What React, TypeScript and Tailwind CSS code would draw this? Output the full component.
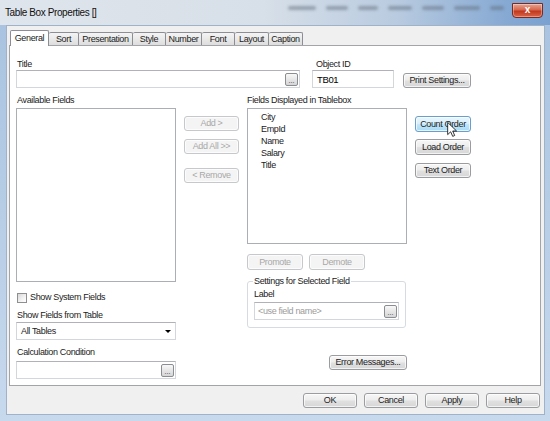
import React from "react";

type Variant = "normal" | "disabled" | "hover";

const variantClass: Record<Variant, string> = {
  normal:
    "border-[#9a9c9f] text-[#222222] bg-[linear-gradient(to_bottom,#f7f7f7,#ededed_46%,#e0e0e0_54%,#d7d7d7)]",
  disabled: "border-[#c6c8cb] text-[#a8a8a8] bg-[#f4f4f4]",
  hover:
    "border-[#6a9fcb] text-[#222222] bg-[linear-gradient(to_bottom,#eaf6fd,#d9f0fc_46%,#bfe6fb_54%,#a9daf5)]",
};

function Button({
  label,
  className,
  variant = "normal",
  children,
}: {
  label: string;
  className: string;
  variant?: Variant;
  children?: React.ReactNode;
}) {
  return (
    <div
      className={`relative flex items-center justify-center rounded-[3px] border shadow-[inset_0_0_0_1px_rgba(255,255,255,0.7)] ${variantClass[variant]} ${className}`}
    >
      <span className="whitespace-nowrap">{label}</span>
      {children}
    </div>
  );
}

function DotsButton() {
  return (
    <div className="flex h-[13px] w-[13px] items-end justify-center rounded-[2px] border border-[#8a8d91] bg-[linear-gradient(to_bottom,#f8f8f8,#e6e6e6_50%,#d6d6d6)] pb-[1px]">
      <span className="text-[7px] leading-[6px] tracking-[0px] text-[#333]">...</span>
    </div>
  );
}

function TextBox({
  className,
  children,
}: {
  className: string;
  children?: React.ReactNode;
}) {
  return (
    <div
      className={`flex items-center border border-[#d3d6da] border-t-[#b0b2b7] bg-white ${className}`}
    >
      {children}
    </div>
  );
}

const tabs = [
  { name: "Sort", w: "w-[30px]" },
  { name: "Presentation", w: "w-[54px]" },
  { name: "Style", w: "w-[33px]" },
  { name: "Number", w: "w-[36px]" },
  { name: "Font", w: "w-[33px]" },
  { name: "Layout", w: "w-[34px]" },
  { name: "Caption", w: "w-[34px]" },
];

const displayedFields = ["City", "EmpId", "Name", "Salary", "Title"];

// blurred menu words of the window behind the glass caption
const glassSmudges = [
  "w-[28px]",
  "w-[22px]",
  "w-[20px]",
  "w-[24px]",
  "w-[22px]",
  "w-[26px]",
  "w-[14px]",
];

function Cursor() {
  return (
    <svg
      className="absolute left-[31px] top-[5px]"
      width="10"
      height="15"
      viewBox="0 0 12 19"
    >
      <path
        d="M0.5 0.5 L0.5 16 L4.3 12.4 L6.9 18.2 L9.4 17.1 L6.9 11.4 L11.8 11.4 Z"
        fill="#ffffff"
        stroke="#000000"
        strokeWidth="1"
        strokeLinejoin="round"
      />
    </svg>
  );
}

export default function App() {
  return (
    <div className="flex h-[421px] w-[550px] flex-col overflow-hidden bg-[#b8cde6] font-['Liberation_Sans',Arial,sans-serif] text-[9px] leading-[11px] tracking-[-0.35px] text-[#222222]">
      {/* caption bar */}
      <div className="flex h-[25px] items-center bg-[linear-gradient(to_right,#dfe5ec,#d7dfe8_48%,#b9cbe0_72%,#86a9d3_92%,#7aa1d0)]">
        <span className="pl-[5px] text-[10px] tracking-[-0.4px] text-[#111]">
          Table Box Properties []
        </span>
        <div className="flex-1" />
        <div className="mt-[-9px] flex gap-[10px] blur-[1.5px]">
          {glassSmudges.map((w, i) => (
            <div key={i} className={`h-[4px] rounded-[2px] bg-[#5d6978] opacity-50 ${w}`} />
          ))}
        </div>
        <div className="mb-[5px] ml-[8px] mr-[7px] flex h-[15px] w-[31px] items-center justify-center rounded-b-[4px] border border-[#7a2a20] bg-[linear-gradient(to_bottom,#e8a493,#d6674e_45%,#c2381c_55%,#d9644a)] shadow-[inset_0_0_0_1px_rgba(255,255,255,0.35)]">
          <span className="text-[10px] font-bold leading-[10px] tracking-[0px] text-white">x</span>
        </div>
      </div>

      {/* window frame + client area */}
      <div className="flex flex-1 flex-col bg-[linear-gradient(to_bottom,#a9c3e0,#c7d9ed)] pb-[6px] pl-[6px] pr-[5px]">
        <div className="flex flex-1 flex-col border border-[#9fb2c8] bg-[#f0f0f0] pl-[2px] pr-[3px] pt-[4px]">
          {/* tab strip */}
          <div className="relative z-10 -mb-px flex h-[16px] items-end pl-[1px]">
            <div className="flex h-[16px] w-[39px] items-center justify-center rounded-t-[2px] border-l border-r border-t border-[#8c8e94] bg-white">
              General
            </div>
            {tabs.map((t) => (
              <div
                key={t.name}
                className={`mb-[1px] flex h-[13px] items-center justify-center rounded-t-[2px] border-r border-t border-[#8c8e94] bg-[linear-gradient(to_bottom,#f4f4f4,#e9e9e9_50%,#dddddd)] ${t.w}`}
              >
                {t.name}
              </div>
            ))}
          </div>

          {/* tab page */}
          <div className="flex h-[341px] flex-col border border-[#a3a4a7] bg-white pl-[6px] pt-[13px]">
            {/* title / object id row */}
            <div className="flex items-end">
              <div className="flex w-[284px] flex-col">
                <span className="h-[11px] pl-[1px]">Title</span>
                <TextBox className="h-[18px] justify-end pr-[1px]">
                  <DotsButton />
                </TextBox>
              </div>
              <div className="ml-[12px] flex w-[82px] flex-col">
                <span className="h-[11px] pl-[4px]">Object ID</span>
                <TextBox className="h-[18px] pl-[4px]">
                  <span className="text-[9.5px] text-black">TB01</span>
                </TextBox>
              </div>
              <Button label="Print Settings..." className="ml-[9px] h-[15px] w-[68px]" />
            </div>

            {/* field lists row */}
            <div className="mt-[7px] flex items-start">
              {/* available fields column */}
              <div className="flex w-[160px] flex-col">
                <span className="h-[11px] pl-[1px]">Available Fields</span>
                <div className="mt-[2px] h-[174px] border border-[#abaeb3] bg-white" />
                <div className="mt-[10px] flex h-[11px] items-center pl-[1px]">
                  <div className="h-[10px] w-[10px] border border-[#8e8f8f] bg-[linear-gradient(135deg,#d9d9d9,#f7f7f7_70%,#ffffff)]" />
                  <span className="ml-[3px]">Show System Fields</span>
                </div>
                <span className="mt-[7px] h-[11px] pl-[1px]">Show Fields from Table</span>
                <TextBox className="mt-[1px] h-[18px] justify-between pl-[4px] pr-[4px]">
                  <span>All Tables</span>
                  <div className="h-0 w-0 border-l-[3px] border-r-[3px] border-t-[3px] border-l-transparent border-r-transparent border-t-black" />
                </TextBox>
                <span className="mt-[7px] h-[11px] pl-[1px]">Calculation Condition</span>
                <TextBox className="mt-[3px] h-[18px] justify-end pr-[1px]">
                  <DotsButton />
                </TextBox>
              </div>

              {/* add / remove buttons */}
              <div className="ml-[8px] flex w-[55px] flex-col pt-[21px]">
                <Button label="Add >" variant="disabled" className="h-[15px]" />
                <Button label="Add All >>" variant="disabled" className="mt-[8px] h-[15px]" />
                <Button label="< Remove" variant="disabled" className="mt-[14px] h-[15px]" />
              </div>

              {/* displayed fields column */}
              <div className="ml-[8px] flex w-[160px] flex-col">
                <span className="h-[11px]">Fields Displayed in Tablebox</span>
                <div className="mt-[2px] flex h-[136px] flex-col border border-[#abaeb3] bg-white pl-[13px] pt-[2px]">
                  {displayedFields.map((f) => (
                    <span key={f} className="leading-[12px]">
                      {f}
                    </span>
                  ))}
                </div>
                <div className="mt-[10px] flex gap-[6px]">
                  <Button label="Promote" variant="disabled" className="h-[16px] w-[56px]" />
                  <Button label="Demote" variant="disabled" className="h-[16px] w-[56px]" />
                </div>
                <fieldset className="mt-[5px] w-[159px] rounded-[3px] border border-[#d5dbe1] pb-[7px] pl-[6px] pr-[6px]">
                  <legend className="ml-[-1px] px-[1px] leading-[12px]">
                    Settings for Selected Field
                  </legend>
                  <span className="mt-[2px] block h-[11px]">Label</span>
                  <TextBox className="mt-[2px] h-[18px] justify-between pl-[3px] pr-[1px]">
                    <span className="text-[#9b9b9b]">&lt;use field name&gt;</span>
                    <DotsButton />
                  </TextBox>
                </fieldset>
                <Button label="Error Messages..." className="mt-[27px] h-[15px] w-[78px] self-end" />
              </div>

              {/* sort order buttons */}
              <div className="ml-[8px] flex w-[56px] flex-col pt-[21px]">
                <Button label="Count Order" variant="hover" className="h-[16px]">
                  <Cursor />
                </Button>
                <Button label="Load Order" className="mt-[7px] h-[16px]" />
                <Button label="Text Order" className="mt-[8px] h-[15px]" />
              </div>
            </div>
          </div>

          {/* dialog buttons */}
          <div className="mt-[7px] flex justify-end gap-[7px] pr-[1px]">
            <Button label="OK" className="h-[15px] w-[54px]" />
            <Button label="Cancel" className="h-[15px] w-[54px]" />
            <Button label="Apply" className="h-[15px] w-[54px]" />
            <Button label="Help" className="h-[15px] w-[54px]" />
          </div>
        </div>
      </div>
    </div>
  );
}
